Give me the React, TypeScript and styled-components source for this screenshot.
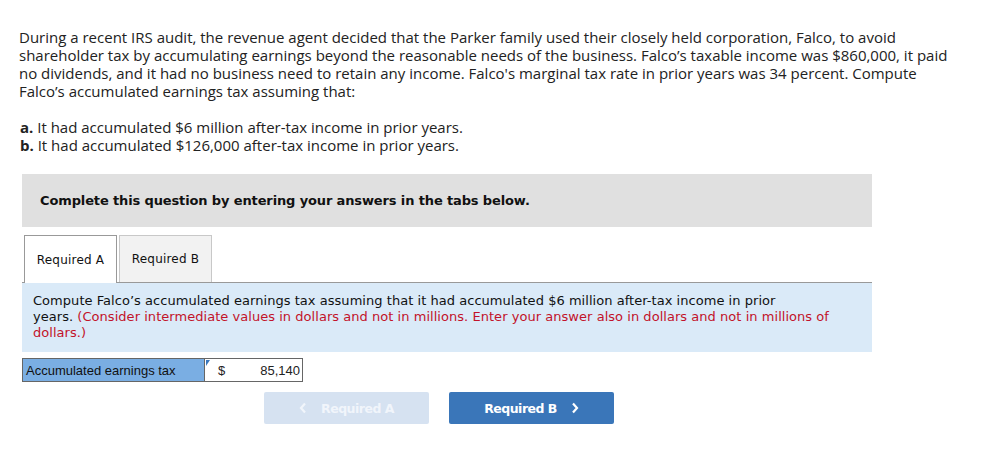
import React from "react";
import styled, { createGlobalStyle } from "styled-components";

const Global = createGlobalStyle`
  body {
    margin: 0;
    background: #fff;
  }
`;

const Page = styled.div`
  padding: 28px 0 0 19px;
  width: 960px;
`;

const Prompt = styled.p`
  margin: 0;
  font-family: "Open Sans", "Liberation Sans", sans-serif;
  font-size: 15px;
  line-height: 18px;
  color: #222;
  white-space: nowrap;
`;

const Parts = styled.div`
  margin: 18px 0 0 1px;
  font-family: "Open Sans", "Liberation Sans", sans-serif;
  font-size: 15px;
  line-height: 18px;
  color: #222;
`;

const PartLetter = styled.b`
  font-weight: 700;
`;

const Question = styled.div`
  margin: 20px 0 0 3px;
  width: 850px;
  font-family: "DejaVu Sans", Verdana, sans-serif;
  font-size: 13px;
`;

const Instruction = styled.div`
  background: #e0e0e0;
  height: 53px;
  display: flex;
  align-items: center;
  padding-left: 18px;
  font-weight: 700;
  letter-spacing: -0.13px;
  color: #111;
`;

const TabBar = styled.div`
  display: flex;
  gap: 2px;
  margin-top: 8px;
  padding-left: 2px;
  border-bottom: 1px solid #999;
  height: 47px;
`;

const Tab = styled.div<{ $active?: boolean }>`
  width: 93px;
  box-sizing: border-box;
  display: flex;
  align-items: center;
  justify-content: center;
  height: ${(p) => (p.$active ? "48px" : "47px")};
  background: ${(p) => (p.$active ? "#fff" : "#f2f2f2")};
  border: 1px solid ${(p) => (p.$active ? "#999" : "#c8c8c8")};
  border-bottom: none;
  color: #111;
  font-size: 12px;
  letter-spacing: 0.2px;
  z-index: ${(p) => (p.$active ? 1 : 0)};
`;

const Panel = styled.div`
  background: #daeaf8;
  padding: 10px 12px 11px 11px;
  line-height: 16px;
  letter-spacing: 0.04px;
  color: #111;
  white-space: nowrap;
`;

const Hint = styled.span`
  color: #c2132a;
`;

const AnswerRow = styled.div`
  display: flex;
  margin-top: 6px;
  height: 22px;
  border: 1px solid #666;
  width: fit-content;
  font-family: "Liberation Sans", Arial, sans-serif;
  font-size: 13px;
`;

const Label = styled.div`
  width: 182px;
  background: #7aaee3;
  border-right: 1px solid #666;
  display: flex;
  align-items: center;
  padding-left: 3px;
  box-sizing: border-box;
  color: #111;
`;

const Cell = styled.div`
  position: relative;
  width: 97px;
  display: flex;
  align-items: center;
  justify-content: space-between;
  padding: 0 1px 0 12px;
  box-sizing: border-box;
  border: 1px solid #fff;
  color: #222;
  &::before {
    content: "";
    position: absolute;
    left: 0;
    top: 0;
    border-top: 6px solid #3b78bd;
    border-right: 4px solid transparent;
  }
`;

const NavRow = styled.div`
  display: flex;
  gap: 20px;
  margin: 10px 0 0 242px;
`;

const NavButton = styled.div<{ $disabled?: boolean }>`
  width: 165px;
  height: 32px;
  border-radius: 2px;
  display: flex;
  align-items: center;
  justify-content: center;
  gap: 14px;
  background: ${(p) => (p.$disabled ? "#d6e2f1" : "#3a76b9")};
  color: ${(p) => (p.$disabled ? "#f1f5fb" : "#fff")};
  font-weight: 700;
  font-size: 12.5px;
  letter-spacing: -0.5px;
`;

const Chevron = ({ dir }: { dir: "left" | "right" }) => (
  <svg width="8" height="12" viewBox="0 0 8 12">
    <path
      d={dir === "left" ? "M6 1.5 L2 6 L6 10.5" : "M2 1.5 L6 6 L2 10.5"}
      fill="none"
      stroke="currentColor"
      strokeWidth="2.2"
    />
  </svg>
);

export default function App() {
  return (
    <Page>
      <Global />
      <Prompt>
        During a recent IRS audit, the revenue agent decided that the Parker family used their closely held corporation, Falco, to avoid
        <br />
        shareholder tax by accumulating earnings beyond the reasonable needs of the business. Falco’s taxable income was $860,000, it paid
        <br />
        no dividends, and it had no business need to retain any income. Falco's marginal tax rate in prior years was 34 percent. Compute
        <br />
        Falco’s accumulated earnings tax assuming that:
      </Prompt>
      <Parts>
        <div>
          <PartLetter>a.</PartLetter> It had accumulated $6 million after-tax income in prior years.
        </div>
        <div>
          <PartLetter>b.</PartLetter> It had accumulated $126,000 after-tax income in prior years.
        </div>
      </Parts>
      <Question>
        <Instruction>Complete this question by entering your answers in the tabs below.</Instruction>
        <TabBar>
          <Tab $active>Required A</Tab>
          <Tab>Required B</Tab>
        </TabBar>
        <Panel>
          Compute Falco’s accumulated earnings tax assuming that it had accumulated $6 million after-tax income in prior
          <br />
          years.{" "}
          <Hint>
            (Consider intermediate values in dollars and not in millions. Enter your answer also in dollars and not in millions of
            <br />
            dollars.)
          </Hint>
        </Panel>
        <AnswerRow>
          <Label>Accumulated earnings tax</Label>
          <Cell>
            <span>$</span>
            <span>85,140</span>
          </Cell>
        </AnswerRow>
        <NavRow>
          <NavButton $disabled>
            <Chevron dir="left" />
            Required A
          </NavButton>
          <NavButton>
            Required B
            <Chevron dir="right" />
          </NavButton>
        </NavRow>
      </Question>
    </Page>
  );
}
